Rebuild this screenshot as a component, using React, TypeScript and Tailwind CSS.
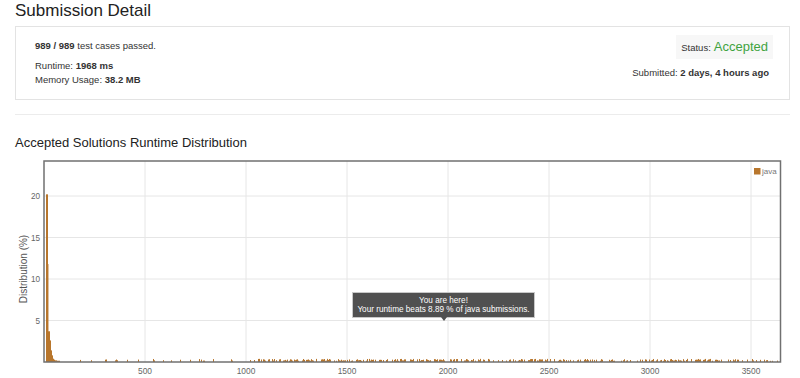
import React from 'react';

const BAR = '#b8762c';
const TOP = 152; // page y where the chart svg starts
const X0 = 44;
const X1 = 780.5;
const Y_TOP = 162 - TOP;
const Y_BOT = 363 - TOP;
const PER_PCT = 8.3;
const PER_MS = 0.202;

const yOf = (pct: number) => Y_BOT - pct * PER_PCT;
const xOf = (ms: number) => X0 + ms * PER_MS;

// the spike at the fast end: [x, width, percent, opacity]
const spike: [number, number, number, number][] = [
  [46, 2, 20.2, 1],
  [48, 1, 11.8, 0.45],
  [48, 2, 3.7, 1],
  [50, 1, 2.6, 1],
  [51, 1, 1.4, 1],
  [52, 1, 0.8, 1],
  [53, 1, 0.4, 1],
  [54, 1, 0.28, 1],
  [55, 2, 0.2, 1],
  [57, 3, 0.15, 1],
];

// how busy the long tail is, by pixel range
const density: [number, number, number][] = [
  [60, 250, 0.16],
  [250, 258, 0.05],
  [258, 345, 0.72],
  [345, 440, 0.5],
  [440, 560, 0.55],
  [560, 650, 0.35],
  [650, 722, 0.7],
  [722, 781, 0.45],
];

function makeTail() {
  let s = 12345;
  const rand = () => {
    s = (s * 1103515245 + 12345) % 2147483648;
    return s / 2147483648;
  };
  const bars: { x: number; h: number }[] = [];
  for (const [a, b, p] of density) {
    for (let x = a; x < b; x++) {
      if (rand() < p) bars.push({ x, h: 0.14 + rand() * 0.24 });
    }
  }
  return bars;
}

const tail = makeTail();

function Chart() {
  const xTicks = [500, 1000, 1500, 2000, 2500, 3000, 3500];
  const yTicks = [5, 10, 15, 20];
  return (
    <div className="relative h-[226px] w-[800px]">
      <svg width={800} height={226} className="block">
        {/* grid */}
        {xTicks.map((t) => (
          <line key={t} x1={xOf(t)} x2={xOf(t)} y1={Y_TOP} y2={Y_BOT} stroke="#e6e6e6" strokeWidth={1} />
        ))}
        {yTicks.map((t) => (
          <line key={t} x1={X0} x2={X1} y1={yOf(t)} y2={yOf(t)} stroke="#e6e6e6" strokeWidth={1} />
        ))}

        {/* bars */}
        {tail.map((b) => (
          <rect key={b.x} x={b.x} y={yOf(b.h)} width={1} height={b.h * PER_PCT} fill={BAR} />
        ))}
        {spike.map(([x, w, p, o], i) => (
          <rect key={i} x={x} y={yOf(p)} width={w} height={p * PER_PCT} fill={BAR} opacity={o} />
        ))}

        {/* frame */}
        <rect
          x={X0}
          y={Y_TOP}
          width={X1 - X0}
          height={Y_BOT - Y_TOP}
          fill="none"
          stroke="#707070"
          strokeWidth={1.5}
        />

        {/* axis labels */}
        {yTicks.map((t) => (
          <text key={t} x={40} y={yOf(t) + 3} textAnchor="end" fontSize={8.2} fill="#666">
            {t}
          </text>
        ))}
        {xTicks.map((t) => (
          <text key={t} x={xOf(t)} y={223} textAnchor="middle" fontSize={8.4} fill="#666">
            {t}
          </text>
        ))}
        <text
          x={0}
          y={0}
          transform="translate(27 118) rotate(-90)"
          textAnchor="middle"
          fontSize={10}
          fill="#555"
        >
          Distribution (%)
        </text>

        {/* legend */}
        <rect x={754} y={169 - TOP} width={6.5} height={6.5} fill={BAR} />
        <text x={762} y={175 - TOP} fontSize={8} fill="#777">
          java
        </text>
      </svg>

      {/* you are here */}
      <div className="absolute left-[352px] top-[141px] flex h-[26px] w-[183px] flex-col items-center justify-center border border-[#c8c8c8] bg-[#505050] text-[8.2px] leading-[9.5px] text-white">
        <span>You are here!</span>
        <span>Your runtime beats 8.89 % of java submissions.</span>
        <div className="absolute left-[88px] top-full h-0 w-0 border-x-[3px] border-t-[4px] border-x-transparent border-t-[#505050]" />
      </div>
    </div>
  );
}

export default function App() {
  return (
    <div className="h-[378px] w-[800px] overflow-hidden bg-white font-['Liberation_Sans',Arial,sans-serif] text-[#333]">
      <div className="px-[15px]">
        <h1 className="pt-[1px] text-[17px] leading-[20px] font-normal text-[#222]">Submission Detail</h1>

        <div className="mt-[5px] flex h-[74px] w-[775px] justify-between border border-[#e3e3e3] text-[9.5px] leading-[14px]">
          <div className="pl-[19px] pt-[12px]">
            <div>
              <b>989 / 989</b> test cases passed.
            </div>
            <div className="mt-[6px]">
              Runtime: <b>1968 ms</b>
            </div>
            <div>
              Memory Usage: <b>38.2 MB</b>
            </div>
          </div>
          <div className="flex flex-col items-end pr-[16px] pt-[8px]">
            <div className="flex h-[24px] items-center bg-[#f7f7f7] px-[5px]">
              <span className="mr-[3px] pt-[2px]">Status:</span>
              <span className="text-[13px] text-[#3fa33f]">Accepted</span>
            </div>
            <div className="mr-[4px] mt-[7px]">
              Submitted: <b>2 days, 4 hours ago</b>
            </div>
          </div>
        </div>

        <div className="mt-[14px] h-px w-[775px] bg-[#ececec]" />

        <h2 className="mt-[20px] text-[13px] leading-[16px] font-normal text-[#222]">
          Accepted Solutions Runtime Distribution
        </h2>
      </div>

      <Chart />
    </div>
  );
}
